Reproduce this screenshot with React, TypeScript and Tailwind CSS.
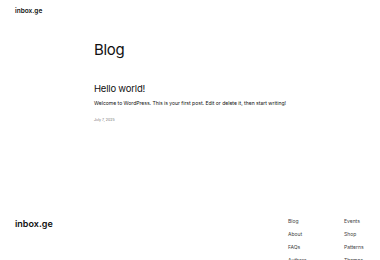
export default function App() {
  const col1 = ["Blog", "About", "FAQs", "Authors"];
  const col2 = ["Events", "Shop", "Patterns", "Themes"];
  return (
    <div className="h-[260px] w-[380px] overflow-hidden bg-white text-[#111111] font-['Inter',sans-serif]">
      <header className="px-[15px] pt-[6px]">
        <div className="text-[6.5px] font-semibold leading-[10px]">inbox.ge</div>
      </header>
      <main className="mx-auto w-[192px] pt-[24px]">
        <h1 className="text-[15px] font-normal leading-[20px] tracking-[-0.3px]">Blog</h1>
        <div className="pt-[22px]">
          <h2 className="text-[9.5px] font-normal leading-[14px] tracking-[-0.2px]">Hello world!</h2>
          <p className="mt-[4px] text-[5.05px] leading-[7px]">
            Welcome to WordPress. This is your first post. Edit or delete it, then start writing!
          </p>
          <div className="mt-[10px] text-[3.6px] leading-[6px] text-[#777777]">July 7, 2025</div>
        </div>
      </main>
      <footer className="mt-[95px] flex items-start pl-[15px]">
        <div className="flex-1 text-[9px] font-semibold leading-[12px]">inbox.ge</div>
        <div className="flex gap-[40px]">
          <div className="flex w-[16px] flex-col gap-[6px] text-[5px] leading-[7px] text-[#444444]">
            {col1.map((t) => (
              <span key={t}>{t}</span>
            ))}
          </div>
          <div className="flex w-[36px] flex-col gap-[6px] text-[5px] leading-[7px] text-[#444444]">
            {col2.map((t) => (
              <span key={t}>{t}</span>
            ))}
          </div>
        </div>
      </footer>
    </div>
  );
}
